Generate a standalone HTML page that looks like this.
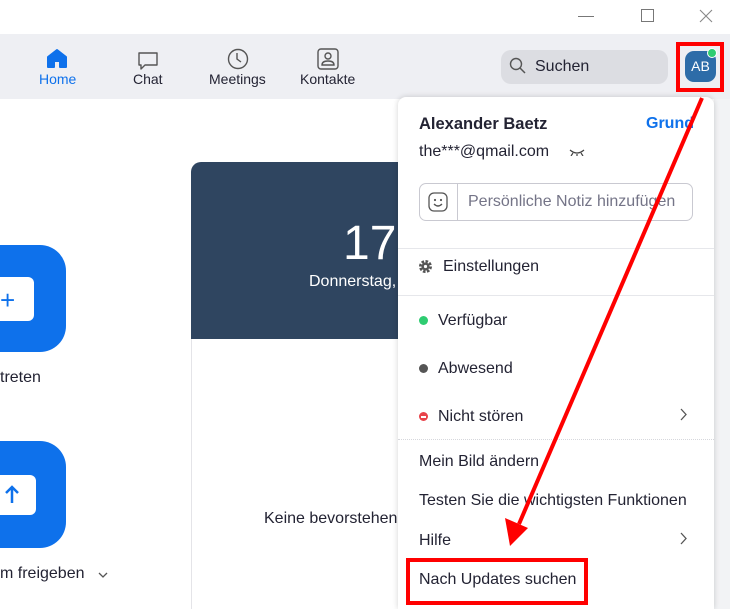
<!DOCTYPE html>
<html style="overflow:hidden"><head><meta charset="utf-8"><style>
*{margin:0;padding:0;box-sizing:border-box}
html,body{width:730px;height:609px;overflow:hidden}
body{position:relative;background:#fff;font-family:"Liberation Sans",sans-serif;color:#232333}
.a{position:absolute;white-space:nowrap}
.mi{position:absolute;left:419px;font-size:16px;color:#232333}
</style></head><body>
<div class="a" style="left:578px;top:16px;width:16px;height:1px;background:#777"></div>
<div class="a" style="left:641px;top:9px;width:13px;height:13px;border:1px solid #777"></div>
<svg class="a" style="left:699px;top:9px" width="14" height="14"><path d="M1 1L13 13M13 1L1 13" stroke="#888" stroke-width="1.1"/></svg>
<div class="a" style="left:0;top:34px;width:730px;height:65px;background:#eeeff3"></div>
<svg class="a" style="left:46px;top:48px" width="22" height="21"><path d="M2 9L11 2L20 9V19H14V13H8V19H2Z" fill="#0e71eb" stroke="#0e71eb" stroke-width="2" stroke-linejoin="round"/></svg>
<div class="a" style="left:39px;top:71px;font-size:14px;color:#0e71eb">Home</div>
<svg class="a" style="left:137px;top:51px" width="22" height="20"><path d="M2 2H20V14H8L4 18V14H2Z" fill="none" stroke="#555" stroke-width="1.4" stroke-linejoin="round"/></svg>
<div class="a" style="left:133px;top:71px;font-size:14px">Chat</div>
<svg class="a" style="left:227px;top:48px" width="22" height="22"><circle cx="11" cy="11" r="9.5" fill="none" stroke="#555" stroke-width="1.4"/><path d="M10 5V11L14 14" fill="none" stroke="#555" stroke-width="1.4"/></svg>
<div class="a" style="left:209px;top:71px;font-size:14px">Meetings</div>
<svg class="a" style="left:317px;top:48px" width="22" height="22"><rect x="1" y="1" width="20" height="20" rx="3" fill="none" stroke="#555" stroke-width="1.4"/><circle cx="11" cy="8" r="3" fill="none" stroke="#555" stroke-width="1.4"/><path d="M5 17Q5 13 11 13Q17 13 17 17Z" fill="none" stroke="#555" stroke-width="1.4"/></svg>
<div class="a" style="left:300px;top:71px;font-size:14px">Kontakte</div>
<div class="a" style="left:501px;top:50px;width:167px;height:34px;border-radius:10px;background:#dcdde2"></div>
<svg class="a" style="left:509px;top:57px" width="18" height="18"><circle cx="7" cy="7" r="5.5" fill="none" stroke="#555" stroke-width="1.4"/><path d="M11 11L16 16" stroke="#555" stroke-width="1.5"/></svg>
<div class="a" style="left:535px;top:58px;font-size:16px">Suchen</div>
<div class="a" style="left:685px;top:51px;width:31px;height:31px;border-radius:9px;background:#2d6ca8;color:#fff;font-size:14px;text-align:center;line-height:31px">AB</div>
<div class="a" style="left:707px;top:48px;width:10px;height:10px;border-radius:50%;background:#2ecc71;border:1px solid #fff"></div>
<div class="a" style="left:676px;top:42px;width:48px;height:50px;border:4px solid #f00"></div>
<div class="a" style="left:714px;top:99px;width:16px;height:510px;background:#f2f3f5"></div>
<div class="a" style="left:-40px;top:245px;width:106px;height:107px;border-radius:26px;background:#0e71eb"></div>
<div class="a" style="left:-10px;top:277px;width:44px;height:44px;border-radius:6px;background:#fff"></div>
<div class="a" style="left:0;top:290px;font-size:26px;color:#0e71eb;line-height:20px">+</div>
<div class="a" style="left:0;top:369px;font-size:16px">treten</div>
<div class="a" style="left:-40px;top:441px;width:106px;height:107px;border-radius:26px;background:#0e71eb"></div>
<div class="a" style="left:-10px;top:475px;width:46px;height:40px;border-radius:6px;background:#fff"></div>
<svg class="a" style="left:4px;top:484px" width="16" height="20"><path d="M8 19V3M2 9L8 3L14 9" fill="none" stroke="#0e71eb" stroke-width="2.5"/></svg>
<div class="a" style="left:0;top:565px;font-size:16px">m freigeben</div>
<svg class="a" style="left:98px;top:572px" width="10" height="7"><path d="M1 1L5 5L9 1" fill="none" stroke="#555" stroke-width="1.3"/></svg>
<div class="a" style="left:191px;top:162px;width:220px;height:177px;border-top-left-radius:10px;background:#2f4560"></div>
<div class="a" style="left:191px;top:339px;width:1px;height:270px;background:#e4e4e8"></div>
<div class="a" style="left:343px;top:218px;font-size:48px;color:#fff;line-height:52px">17</div>
<div class="a" style="left:309px;top:273px;font-size:16px;color:#fff">Donnerstag,</div>
<div class="a" style="left:264px;top:510px;font-size:16px">Keine bevorstehend</div>
<div class="a" style="left:398px;top:97px;width:316px;height:512px;background:#fff;border-radius:8px 8px 0 0;box-shadow:0 0 6px rgba(0,0,0,.18)"></div>
<div class="a" style="left:419px;top:115px;font-size:16.5px;font-weight:bold">Alexander Baetz</div>
<div class="a" style="left:646px;top:115px;font-size:16px;font-weight:bold;color:#0e71eb">Grund</div>
<div class="a" style="left:419px;top:143px;font-size:16px">the***@qmail.com</div>
<svg class="a" style="left:569px;top:148px" width="16" height="8"><path d="M1 2Q8 8 15 2M4 5L2 8M8 6V8M12 5L14 8" fill="none" stroke="#444" stroke-width="1.2"/></svg>
<div class="a" style="left:419px;top:183px;width:274px;height:38px;border:1px solid #c9c9d1;border-radius:7px"></div>
<div class="a" style="left:457px;top:184px;width:1px;height:36px;background:#c9c9d1"></div>
<svg class="a" style="left:428px;top:192px" width="20" height="20"><rect x="1" y="1" width="18" height="18" rx="5" fill="none" stroke="#555" stroke-width="1.3"/><circle cx="7" cy="8" r="1.1" fill="#555"/><circle cx="13" cy="8" r="1.1" fill="#555"/><path d="M6 12Q10 16 14 12" fill="none" stroke="#555" stroke-width="1.3"/></svg>
<div class="a" style="left:468px;top:193px;font-size:16px;color:#747487">Persönliche Notiz hinzufügen</div>
<div class="a" style="left:398px;top:248px;width:316px;height:1px;background:#e6e7eb"></div>
<svg class="a" style="left:418px;top:259px" width="15" height="15"><circle cx="7.5" cy="7.5" r="5" fill="none" stroke="#555" stroke-width="3" stroke-dasharray="2.5 1.4"/><circle cx="7.5" cy="7.5" r="4" fill="#555"/><circle cx="7.5" cy="7.5" r="1.6" fill="#fff"/></svg>
<div class="mi" style="left:443px;top:258px">Einstellungen</div>
<div class="a" style="left:398px;top:295px;width:316px;height:1px;background:#e6e7eb"></div>
<div class="a" style="left:419px;top:316px;width:9px;height:9px;border-radius:50%;background:#2ecc71"></div>
<div class="mi" style="left:438px;top:312px">Verfügbar</div>
<div class="a" style="left:419px;top:364px;width:9px;height:9px;border-radius:50%;background:#555"></div>
<div class="mi" style="left:438px;top:360px">Abwesend</div>
<div class="a" style="left:419px;top:412px;width:9px;height:9px;border-radius:50%;background:#e8434a"></div>
<div class="a" style="left:421px;top:416px;width:5px;height:1.5px;background:#fff"></div>
<div class="mi" style="left:438px;top:408px">Nicht stören</div>
<svg class="a" style="left:680px;top:408px" width="8" height="13"><path d="M1 1L6 6.5L1 12" fill="none" stroke="#555" stroke-width="1.3"/></svg>
<div class="a" style="left:398px;top:439px;width:316px;height:0;border-top:1px dotted #d6d7dc"></div>
<div class="mi" style="top:453px">Mein Bild ändern</div>
<div class="mi" style="top:492px">Testen Sie die wichtigsten Funktionen</div>
<div class="mi" style="top:532px">Hilfe</div>
<svg class="a" style="left:680px;top:532px" width="8" height="13"><path d="M1 1L6 6.5L1 12" fill="none" stroke="#555" stroke-width="1.3"/></svg>
<div class="mi" style="top:571px">Nach Updates suchen</div>
<div class="a" style="left:406px;top:558px;width:182px;height:47px;border:4px solid #f00"></div>
<svg class="a" style="left:0;top:0" width="730" height="609"><path d="M702 98L519 524" stroke="#f00" stroke-width="4"/><path d="M510 546L505 518L528 528Z" fill="#f00"/></svg>
</body></html>
